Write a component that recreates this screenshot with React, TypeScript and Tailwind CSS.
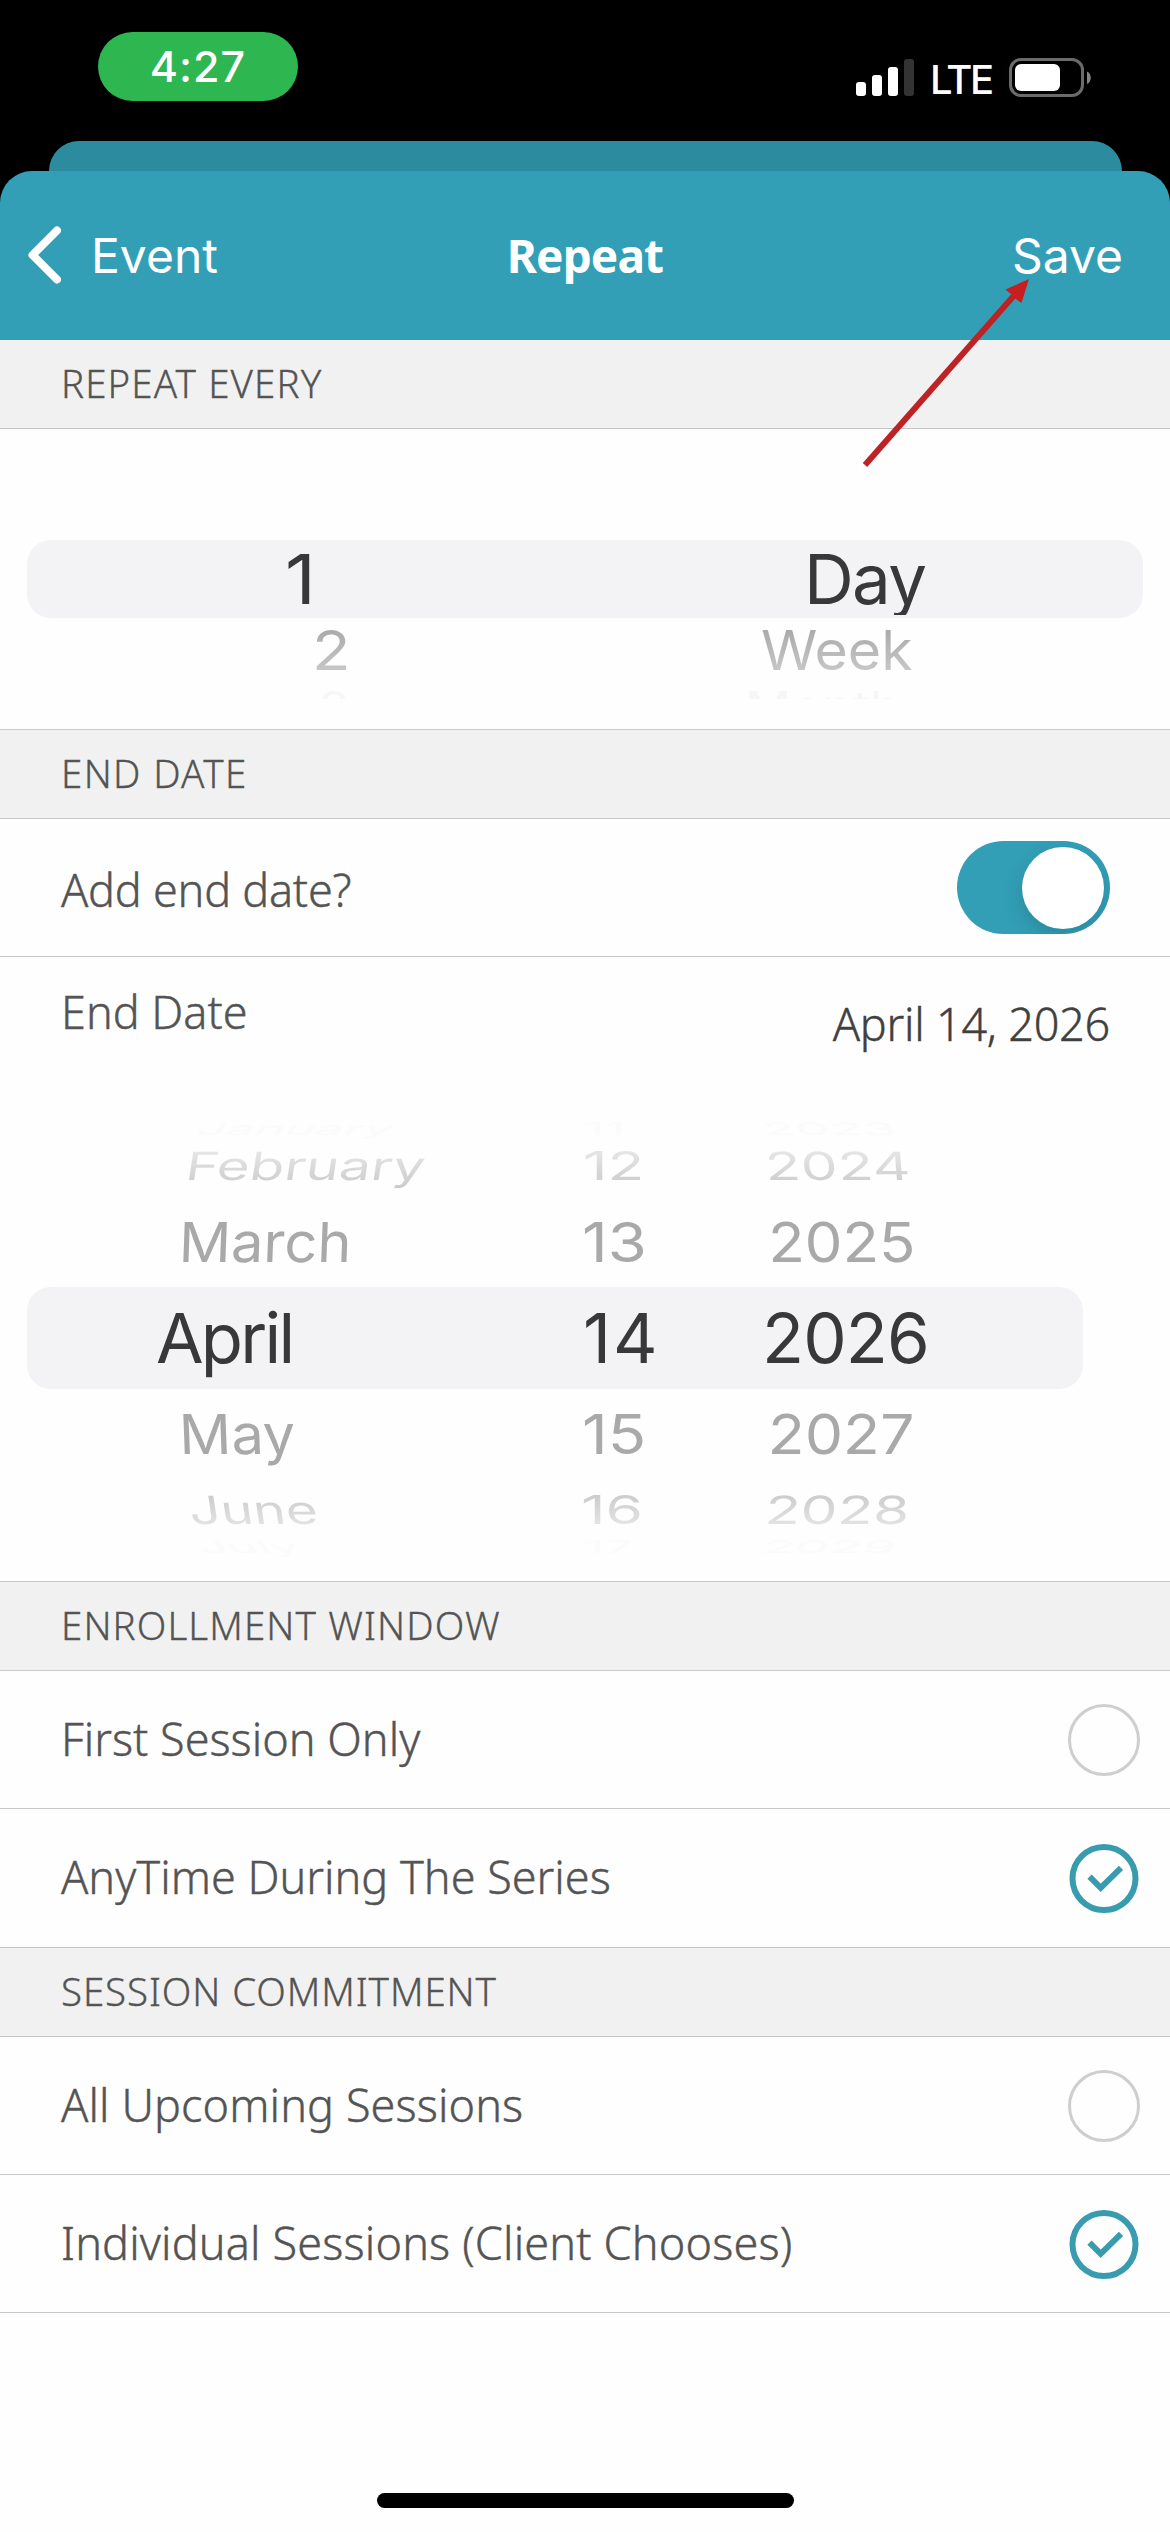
import clsx from "clsx";

interface WheelItem {
  text: string;
  className: string;
}

// Row heights and text sizes shrink away from the selected row, like a turning drum.
const ROW = {
  edge: "h-5 text-[34px] text-[#fbfbfb]",
  far: "h-[60px] text-[39px]",
  near: "h-[92px] text-[55px] text-[#a9a9aa]",
  selected: "h-[100px] text-[69px] text-[#38383a]",
};

const FADE_UP = "bg-linear-to-b from-[#ececec] to-[#c9c9c9] bg-clip-text text-transparent";
const FADE_DOWN = "bg-linear-to-b from-[#c6c6c6] to-[#eaeaea] bg-clip-text text-transparent";

const DATE_ROWS = [ROW.edge, ROW.far, ROW.near, ROW.selected, ROW.near, ROW.far, ROW.edge];

const MONTHS: WheelItem[] = [
  { text: "January", className: "ml-[198px] mt-1.5 scale-x-150 -skew-x-12 scale-y-50" },
  { text: "February", className: clsx("ml-[186px] scale-x-[1.45] -skew-x-6", FADE_UP) },
  { text: "March", className: "ml-[179px] scale-x-[1.05] -skew-x-2" },
  { text: "April", className: "ml-[156px] tracking-[-2.8px]" },
  { text: "May", className: "ml-[179px] scale-x-[1.05] skew-x-2" },
  { text: "June", className: clsx("ml-[189px] scale-x-[1.41] skew-x-6", FADE_DOWN) },
  { text: "July", className: "ml-[198px] mb-1.5 scale-x-150 skew-x-12 scale-y-50" },
];

const DAYS: WheelItem[] = [
  { text: "11", className: "ml-6 mt-1.5 scale-x-150 scale-y-50" },
  { text: "12", className: clsx("ml-[23px] scale-x-[1.55]", FADE_UP) },
  { text: "13", className: "ml-[22px] scale-x-[1.15]" },
  { text: "14", className: "ml-[23px] tracking-[2px]" },
  { text: "15", className: "ml-[22px] scale-x-[1.15]" },
  { text: "16", className: clsx("ml-[21px] scale-x-[1.55]", FADE_DOWN) },
  { text: "17", className: "ml-6 mb-1.5 scale-x-150 scale-y-50" },
];

const YEARS: WheelItem[] = [
  { text: "2023", className: "ml-[22px] mt-1.5 scale-x-[1.6] scale-y-50 skew-x-6" },
  { text: "2024", className: clsx("ml-[25px] scale-x-150 skew-x-3", FADE_UP) },
  { text: "2025", className: "ml-[28px] scale-x-[1.09] skew-x-1" },
  { text: "2026", className: "ml-[22px] tracking-[-0.9px]" },
  { text: "2027", className: "ml-[28px] scale-x-[1.1] -skew-x-1" },
  { text: "2028", className: clsx("ml-[25px] scale-x-150 -skew-x-3", FADE_DOWN) },
  { text: "2029", className: "ml-[22px] mb-1.5 scale-x-[1.6] scale-y-50 -skew-x-6" },
];

const REPEAT_ROWS = [
  "h-[72px] text-[69px] text-[#38383a] overflow-hidden",
  "h-[69px] text-[55px]",
  "h-[15px] text-[39px] text-[#f6f6f6] overflow-hidden items-start!",
];

const FADE_NEAR = "bg-linear-to-b from-[#a2a2a3] to-[#cfcfcf] bg-clip-text text-transparent";

const COUNTS: WheelItem[] = [
  { text: "1", className: "ml-[285px] scale-x-110" },
  { text: "2", className: clsx("ml-[312px] scale-x-[1.15]", FADE_NEAR) },
  { text: "3", className: "ml-[319px] -mt-px scale-x-125" },
];

const UNITS: WheelItem[] = [
  { text: "Day", className: "ml-[219px] tracking-[-1.7px]" },
  { text: "Week", className: clsx("ml-[176px] scale-x-[1.04]", FADE_NEAR) },
  { text: "Month", className: "ml-[160px] -mt-px scale-x-[1.32]" },
];

function Wheel({ items, rows, className }: { items: WheelItem[]; rows: string[]; className: string }) {
  return (
    <div className={clsx("relative flex flex-col font-['Inter',sans-serif]", className)}>
      {items.map((item, i) => (
        <div key={item.text} className={clsx("flex items-center", rows[i])}>
          <span className={clsx("origin-left whitespace-nowrap leading-[1.2]", item.className)}>{item.text}</span>
        </div>
      ))}
    </div>
  );
}

function SectionHeader({ title, className }: { title: string; className?: string }) {
  return (
    <div className={clsx("flex items-center border-b border-[#c8c8c8] bg-[#f1f1f1] pl-[61px]", className)}>
      <h2 className="text-[38.5px] font-light [-webkit-text-stroke:0.3px]">{title}</h2>
    </div>
  );
}

function OptionRow({ label, checked, className }: { label: string; checked: boolean; className?: string }) {
  return (
    <div className={clsx("flex h-[138px] items-center justify-between pl-[61px] pr-[30px]", className)}>
      <span className="pb-0.5 text-[45px] font-light [-webkit-text-stroke:0.4px]">{label}</span>
      <svg viewBox="0 0 72 72" className="size-[72px]" fill="none">
        {checked ? (
          <g stroke="#389cae" strokeWidth="6">
            <circle cx="36" cy="36.5" r="31.5" />
            <path d="M21.5 34.6 32.7 45.8 53 25.8" />
          </g>
        ) : (
          <circle cx="36" cy="36" r="34.5" stroke="#cecece" strokeWidth="3" />
        )}
      </svg>
    </div>
  );
}

function StatusBar() {
  return (
    <div className="flex h-[141px] items-start justify-between pl-[98px] pr-[79px] font-['Inter',sans-serif] font-medium text-white">
      <div className="mt-8 flex h-[69px] w-50 items-center justify-center rounded-full bg-[#2eb650] text-[43px] tracking-[1px]">
        4:27
      </div>
      <div className="mt-[57px] flex h-[41px] items-center">
        <svg viewBox="0 0 58 37" className="h-[37px] w-[58px]" fill="#fff">
          <rect x="0" y="23" width="10" height="14" rx="3" />
          <rect x="16" y="16" width="10" height="21" rx="3" />
          <rect x="32" y="8" width="10" height="29" rx="3" />
          <rect x="48" y="0" width="10" height="37" rx="3" fill="#333" />
        </svg>
        <span className="ml-4 mt-1 w-[79px] text-[40px] tracking-[-2.5px]">LTE</span>
        <svg viewBox="0 0 82 39" className="h-[39px] w-[82px]">
          <rect x="1.5" y="1.5" width="72" height="36" rx="10.5" fill="none" stroke="#6b6b6b" strokeWidth="3" />
          <rect x="6" y="6" width="45" height="27" rx="6" fill="#fff" />
          <path d="M78 13.5c5 2 5 10.5 0 12.5z" fill="#858585" />
        </svg>
      </div>
    </div>
  );
}

function NavBar() {
  return (
    <header className="grid h-[169px] grid-cols-3 items-center rounded-t-[32px] bg-[#329fb7] pl-7 pr-[47px] text-white">
      <div className="flex items-center gap-[30px] font-['Inter',sans-serif] text-[48px]">
        <svg viewBox="0 0 33 58" className="mb-0.5 h-[58px] w-[33px]" fill="none" stroke="#fff" strokeWidth="8" strokeLinecap="round" strokeLinejoin="round">
          <path d="M29 4.5 4.5 29 29 53.5" />
        </svg>
        Event
      </div>
      <h1 className="pl-[19px] text-center text-[46px] font-bold tracking-[-0.9px]">Repeat</h1>
      <div className="text-right font-['Inter',sans-serif] text-[48px]">Save</div>
    </header>
  );
}

function Toggle() {
  return (
    <div className="flex h-[93px] w-[153px] items-center justify-end overflow-hidden rounded-full bg-[#329fb7] pr-1.5">
      <div className="size-[82px] rounded-full bg-white shadow-[0_8px_20px_rgba(0,0,0,0.15)]" />
    </div>
  );
}

export default function App() {
  return (
    <div className="relative flex h-[2532px] w-[1170px] flex-col overflow-hidden bg-black font-['Noto_Sans','Open_Sans',sans-serif] text-[#545454]">
      <StatusBar />
      <div className="mx-[48.5px] h-[70px] shrink-0 rounded-t-[30px] bg-[#2c8b9f]" />
      <div className="relative -mt-10 flex flex-1 flex-col">
        <NavBar />
        <main className="flex flex-1 flex-col bg-[#fefefe]">
          <SectionHeader title="REPEAT EVERY" className="h-[89px] tracking-[1.1px]" />
          <div className="relative flex h-[300px] pt-[114px]">
            <div className="absolute left-[27px] top-[111px] h-[78px] w-[1116px] rounded-3xl bg-[#f3f3f5]" />
            <Wheel items={COUNTS} rows={REPEAT_ROWS} className="w-[585px]" />
            <Wheel items={UNITS} rows={REPEAT_ROWS} className="w-[585px]" />
          </div>

          <SectionHeader title="END DATE" className="h-[90px] border-t tracking-[1.35px]" />
          <div className="flex h-[138px] items-center justify-between border-b border-[#c8c8c8] pl-[61px] pr-[60px]">
            <span className="pt-1 text-[45px] font-light tracking-[-0.25px] [-webkit-text-stroke:0.4px]">Add end date?</span>
            <Toggle />
          </div>
          <div className="flex h-[159px] items-start justify-between pl-[61px] pr-[60px] pt-[25px] text-[45px] font-light leading-[60px] [-webkit-text-stroke:0.4px]">
            <span>End Date</span>
            <span className="mt-3 tracking-[-0.25px] text-[#404040]">April 14, 2026</span>
          </div>
          <div className="relative flex h-[465px]">
            <div className="absolute left-[27px] top-[171px] h-[102px] w-[1056px] rounded-3xl bg-[#f3f3f5]" />
            <Wheel items={MONTHS} rows={DATE_ROWS} className="w-[560px]" />
            <Wheel items={DAYS} rows={DATE_ROWS} className="w-[180px]" />
            <Wheel items={YEARS} rows={DATE_ROWS} className="w-[343px]" />
          </div>

          <SectionHeader title="ENROLLMENT WINDOW" className="h-[90px] border-t tracking-[1.1px]" />
          <OptionRow label="First Session Only" checked={false} className="border-b border-[#c8c8c8]" />
          <OptionRow label="AnyTime During The Series" checked />

          <SectionHeader title="SESSION COMMITMENT" className="h-[90px] border-t tracking-[0.9px]" />
          <OptionRow label="All Upcoming Sessions" checked={false} className="border-b border-[#c8c8c8] tracking-[0.1px]" />
          <OptionRow label="Individual Sessions (Client Chooses)" checked className="border-b border-[#c8c8c8] tracking-[0.15px]" />

          <div className="mt-auto flex justify-center pb-6">
            <div className="h-[15px] w-[417px] rounded-full bg-black" />
          </div>
        </main>
      </div>

      {/* callout arrow pointing at Save */}
      <svg viewBox="0 0 170 192" className="absolute left-[861px] top-[277px] h-[192px] w-[170px]">
        <path d="M4 188 157 14" stroke="#bd2325" strokeWidth="6" fill="none" />
        <path d="M168 2 144.5 12.5 151 18 155.5 22.5 160.5 26z" fill="#c81e1e" />
      </svg>
    </div>
  );
}
